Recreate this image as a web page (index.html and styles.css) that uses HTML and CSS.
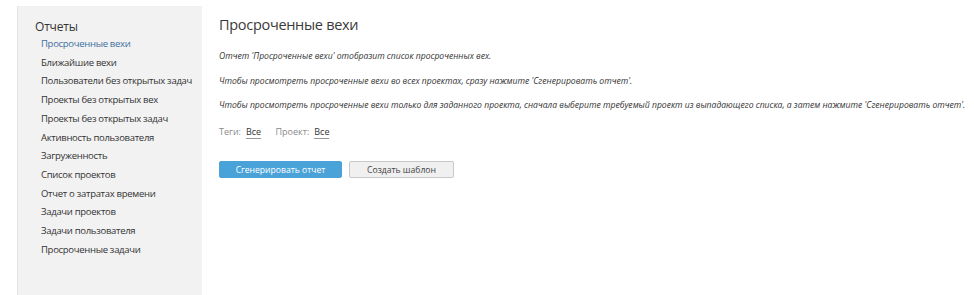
FILE: index.html
```html
<!DOCTYPE html>
<html lang="ru">
<head>
  <meta charset="UTF-8" />
  <title>Просроченные вехи</title>
  <link rel="stylesheet" href="styles.css">
</head>
<body>
  <div class="page">
    <div class="sidebar">
      <div class="side-title">Отчеты</div>
      <ul class="side-menu">
        <li class="active">Просроченные вехи</li>
        <li>Ближайшие вехи</li>
        <li>Пользователи без открытых задач</li>
        <li>Проекты без открытых вех</li>
        <li>Проекты без открытых задач</li>
        <li>Активность пользователя</li>
        <li>Загруженность</li>
        <li>Список проектов</li>
        <li>Отчет о затратах времени</li>
        <li>Задачи проектов</li>
        <li>Задачи пользователя</li>
        <li>Просроченные задачи</li>
      </ul>
    </div>
    <div class="content">
      <h1>Просроченные вехи</h1>
      <p class="note">Отчет 'Просроченные вехи' отобразит список просроченных вех.</p>
      <p class="note">Чтобы просмотреть просроченные вехи во всех проектах, сразу нажмите 'Сгенерировать отчет'.</p>
      <p class="note">Чтобы просмотреть просроченные вехи только для заданного проекта, сначала выберите требуемый проект из выпадающего списка, а затем нажмите 'Сгенерировать отчет'.</p>
      <div class="filters">
        <span class="filter-label">Теги:</span><span class="filter-value">Все</span>
        <span class="filter-label gap">Проект:</span><span class="filter-value">Все</span>
      </div>
      <div class="actions">
        <button class="btn btn-blue">Сгенерировать отчет</button>
        <button class="btn btn-grey">Создать шаблон</button>
      </div>
    </div>
  </div>
</body>
</html>
```

FILE: styles.css
```css
/* Base */
* { box-sizing: border-box; margin: 0; padding: 0; }
body { font-family: 'Open Sans', sans-serif; background: #fff; color: #333; }
.page { display: flex; padding: 6px 0 0 17px; height: 295px; }

/* Sidebar */
.sidebar { width: 185px; background: #f2f2f2; border-left: 1px solid #e4e4e4; padding: 13px 0 0 17px; flex-shrink: 0; }
.side-title { font-size: 12px; color: #333; line-height: 16px; letter-spacing: -0.2px; }
.side-menu { list-style: none; padding-left: 6px; margin-top: 0; }
.side-menu li { font-size: 9.5px; line-height: 18.7px; color: #333; white-space: nowrap; letter-spacing: -0.3px; }
.side-menu li.active { color: #3f6f9e; }

/* Content */
.content { padding: 8px 0 0 17px; }
h1 { font-size: 14.5px; font-weight: normal; color: #3a3a3a; line-height: 22px; margin-bottom: 14px; letter-spacing: -0.3px; }
.note { font-size: 8.6px; font-style: italic; color: #333; line-height: 12px; margin-bottom: 12.6px; white-space: nowrap; }
.filters { margin-top: 14px; font-size: 9px; line-height: 14px; }
.filter-label { color: #8a8a8a; margin-right: 5px; }
.filter-label.gap { margin-left: 12px; }
.filter-value { color: #333; border-bottom: 1px solid #999; }
.actions { display: flex; gap: 7px; margin-top: 22px; }
.btn { font-family: 'Open Sans', sans-serif; font-size: 8.6px; height: 17px; border-radius: 2px; cursor: pointer; }
.btn-blue { width: 123px; background: #4aa3d8; color: #fff; border: 1px solid #4aa3d8; }
.btn-grey { width: 105px; background: #f0f0f0; color: #444; border: 1px solid #c8c8c8; }
```
